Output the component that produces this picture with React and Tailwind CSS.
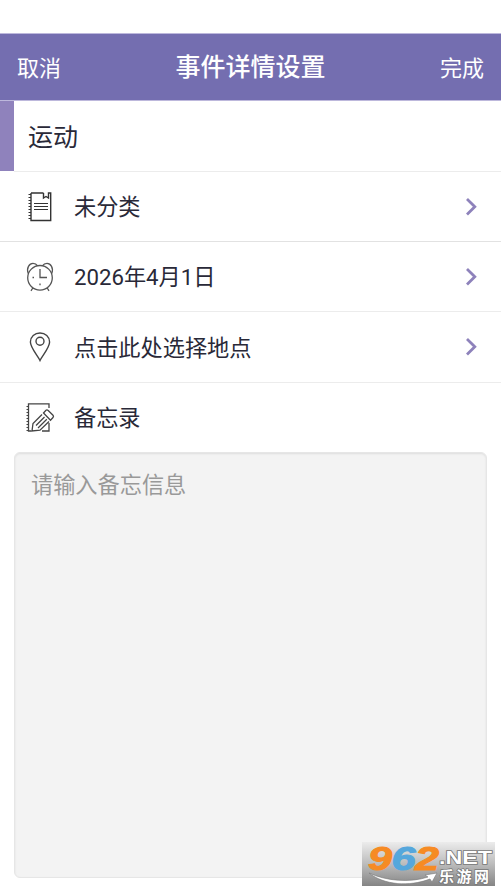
import React from "react";

function NotebookIcon() {
	return (
		<svg width="30" height="30" viewBox="0 0 30 30" fill="none" stroke="#333" strokeWidth="1.4">
			<path d="M6 1H18.5M18.5 1V6L21 4.5L23.5 6V1H25.7V28.5H6V1" />
			<path d="M9 11.5H23M9 14.5H23M9 17.5H23" strokeWidth="1.2" />
			<path d="M3.5 2.5H6M3.5 5.5H6M3.5 8.5H6M3.5 11.5H6M3.5 14.5H6M3.5 17.5H6M3.5 20.5H6M3.5 23.5H6M3.5 26.5H6" strokeWidth="1.2" />
		</svg>
	);
}

function ClockIcon() {
	return (
		<svg width="30" height="30" viewBox="0 0 30 30" fill="none" stroke="#555" strokeWidth="1.3">
			<circle cx="15" cy="15.8" r="12.3" />
			<path d="M3.3 11.5C1 6 4.5 1.4 8 1.4C10.5 1.4 11.5 2.2 12.3 3.6M26.7 11.5C29 6 25.5 1.4 22 1.4C19.5 1.4 18.5 2.2 17.7 3.6" />
			<path d="M7.8 26L6 28.8M22.2 26L24 28.8" />
			<path d="M15 7V15.5H22M15 21.5V23.2M7.5 15.5H9" />
		</svg>
	);
}

function PinIcon() {
	return (
		<svg width="30" height="30" viewBox="0 0 30 30" fill="none" stroke="#444" strokeWidth="1.4">
			<path d="M15 28.5C13 24 5.4 15.8 5.4 10C5.4 4.8 9.7 1 15 1S24.6 4.8 24.6 10C24.6 15.8 17 24 15 28.5Z" />
			<circle cx="15" cy="9.3" r="4" />
		</svg>
	);
}

function MemoIcon() {
	return (
		<svg width="30" height="30" viewBox="0 0 30 30" fill="none" stroke="#444" strokeWidth="1.3">
			<path d="M24 5V.8H3.5V28H6.5M17 28H24V20" />
			<path d="M1.5 3.5H3.5M1.5 6.5H3.5M1.5 9.5H3.5M1.5 12.5H3.5M1.5 15.5H3.5M1.5 18.5H3.5M1.5 21.5H3.5M1.5 24.5H3.5M1.5 27.5H3.5" strokeWidth="1.2" />
			<path d="M18.5 10L21 7.3Q22 6.5 23.2 7.5L28 12.3Q29 13.4 28 14.5L25.5 17.2ZM17 11.5L8 20.5L7 28L15 27.2L24 18.5M19.5 14L11 22.5M21.8 16.3L13 25" />
		</svg>
	);
}

function Row({ icon, label, arrow, className }) {
	return (
		<div className={`flex items-center pl-[25px] pr-[23px] ${className}`}>
			{icon}
			<span className="ml-[19px] flex-1 pt-px text-[22.2px] leading-[30px] text-[#292938]">{label}</span>
			{arrow &&
				<svg width="14" height="20" viewBox="0 0 14 20" fill="none" stroke="#8e82bb" strokeWidth="2.8">
					<path d="M3 1.9L10.8 9.7L3 17.5" />
				</svg>}
		</div>
	);
}

function SiteBadge() {
	return (
		<div className="absolute left-[362px] top-[842px] h-[44px] w-[133px] bg-linear-to-b from-[#ececec] via-[#bcbcbc] to-[#858585]">
			<svg width="133" height="44" viewBox="0 0 133 44" fontFamily="Liberation Sans, sans-serif" fontWeight="bold">
				<g fontSize="33" fontStyle="italic" strokeWidth="1">
					<text x="6" y="28" textLength="24" lengthAdjust="spacingAndGlyphs" fill="#f68b24" stroke="#f68b24">9</text>
					<text x="29.5" y="28" textLength="24" lengthAdjust="spacingAndGlyphs" fill="#55a7dc" stroke="#55a7dc">6</text>
					<text x="53" y="28" textLength="24" lengthAdjust="spacingAndGlyphs" fill="#f68b24" stroke="#f68b24">2</text>
				</g>
				<path d="M7 31C24 39 48 41 66 35L63 33L75 31L70 40L68 37C47 45 22 43 7 31Z" fill="#fff" stroke="#777" strokeWidth=".6" />
				<g fill="#fff" stroke="#777" strokeWidth="1.5" paintOrder="stroke">
					<text x="77" y="22" fontSize="18.5" textLength="53" lengthAdjust="spacingAndGlyphs">.NET</text>
					<text x="77" y="39.5" fontSize="15" textLength="50" fontFamily="Noto Sans CJK SC, sans-serif">乐游网</text>
				</g>
			</svg>
		</div>
	);
}

export default function App() {
	return (
		<div className="relative flex h-[892px] w-[501px] flex-col overflow-hidden bg-white pt-[33px] font-['Roboto','Noto_Sans_CJK_SC',sans-serif]">
			<header className="grid h-[68px] shrink-0 grid-cols-[1fr_auto_1fr] items-center border-y border-[#bdb8dc] bg-[#746eb0] px-[17px] pt-[2px] text-[22px] text-white">
				<span>取消</span>
				<h1 className="text-[25px] font-medium">事件详情设置</h1>
				<span className="text-right">完成</span>
			</header>
			<div className="flex h-[71px] shrink-0">
				<div className="h-[70px] w-[14px] bg-[#8f82bc]" />
				<div className="flex flex-1 items-center border-b border-[#ececec] pl-[14px] pt-[4px] text-[25px] text-[#292938]">
					运动
				</div>
			</div>
			<Row icon={<NotebookIcon />} label="未分类" arrow className="h-[70px] shrink-0 border-b border-[#e2e2e2]" />
			<Row icon={<ClockIcon />} label="2026年4月1日" arrow className="h-[70px] shrink-0 border-b border-[#ececec]" />
			<Row icon={<PinIcon />} label="点击此处选择地点" arrow className="h-[71px] shrink-0 border-b border-[#ececec]" />
			<Row icon={<MemoIcon />} label="备忘录" className="h-[69px] shrink-0" />
			<textarea
				placeholder="请输入备忘信息"
				className="mx-[14px] block h-[426px] shrink-0 resize-none rounded-[6px] border border-[#e6e6e6] bg-[#f3f3f3] px-[16px] py-[16px] text-[22.2px] leading-[32px] shadow-[inset_0_1px_2px_#dedede] outline-none placeholder:text-[#999]"
			/>
			<SiteBadge />
		</div>
	);
}
